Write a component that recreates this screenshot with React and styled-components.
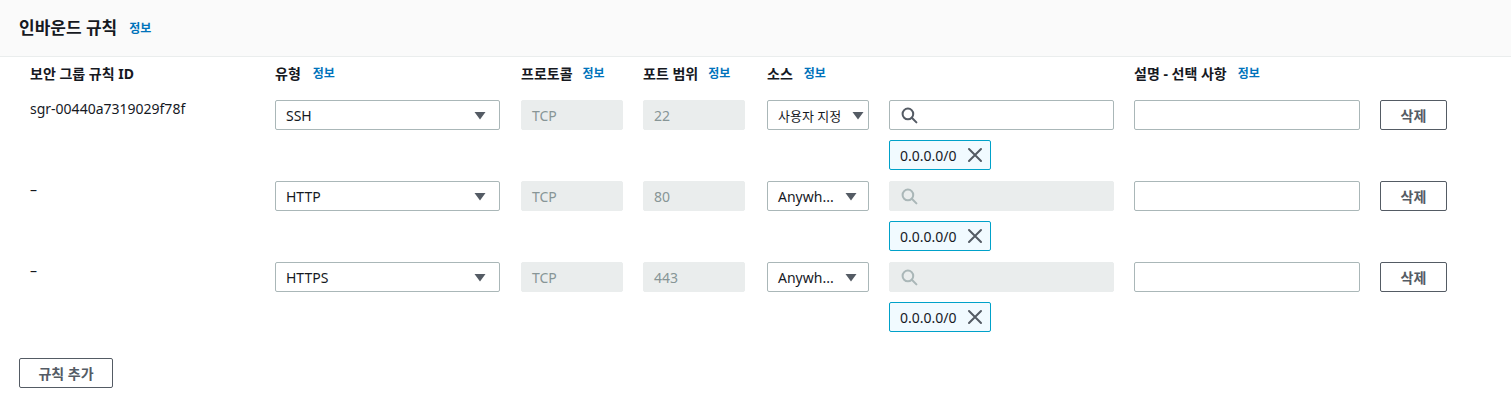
import React from 'react'
import styled, { createGlobalStyle } from 'styled-components'

const GlobalStyle = createGlobalStyle`
  body {
    margin: 0;
    background: #fff;
    font-family: "Noto Sans", "Noto Sans CJK KR", sans-serif;
    color: #16191f;
  }
`;

const Panel = styled.section`
  width: 1511px;
  min-height: 407px;
  background: #fff;
`;

const PanelHeader = styled.header`
  height: 57px;
  box-sizing: border-box;
  background: #fafafa;
  border-bottom: 1px solid #eaeded;
  display: flex;
  align-items: center;
  gap: 12px;
  padding: 0 19px 1px;
`;

const Title = styled.h2`
  margin: 0;
  font-size: 17px;
  font-weight: 700;
  line-height: 22px;
`;

const InfoLink = styled.a`
  font-size: 12px;
  font-weight: 700;
  color: #0073bb;
  text-decoration: none;
  margin-left: ${p => p.$gap || 0}px;
`;

const Grid = styled.div`
  display: grid;
  grid-template-columns: 225px 226px 102px 104px 102px 225px 226px 67px;
  column-gap: 20px;
  padding: 6px 0 0 30px;
`;

const HeadCell = styled.div`
  display: flex;
  align-items: center;
  height: 20px;
  font-size: 14px;
  font-weight: 700;
  margin-bottom: 17px;
`;

const IdCell = styled.div`
  font-size: 14px;
  line-height: 18px;
  height: 30px;
`;

const Stack = styled.div`
  display: flex;
  flex-direction: column;
  gap: 10px;
  margin-bottom: ${p => (p.$last ? 0 : 11)}px;
  align-items: flex-start;
`;

const Box = styled.div`
  box-sizing: border-box;
  height: 30px;
  width: ${p => p.$w || '100%'};
  display: flex;
  align-items: center;
  gap: ${p => p.$gap || 6}px;
  padding: 0 ${p => p.$pr || 10}px 0 ${p => p.$pl || 10}px;
  font-size: 14px;
  border-radius: 2px;
  border: 1px solid ${p => (p.$disabled ? '#eaeded' : '#aab7b8')};
  background: ${p => (p.$disabled ? '#eaeded' : '#fff')};
  color: ${p => (p.$disabled ? '#879596' : '#16191f')};
  white-space: nowrap;
`;

const BoxText = styled.span`
  flex: 1;
  font-size: ${p => p.$size || 14}px;
`;

const Token = styled.div`
  box-sizing: border-box;
  height: 30px;
  width: 102px;
  display: flex;
  align-items: center;
  justify-content: space-between;
  padding: 0 7px 0 10px;
  font-size: 14px;
  border: 1px solid #00a1c9;
  border-radius: 2px;
  background: #f1faff;
`;

const Button = styled.button`
  box-sizing: border-box;
  height: 30px;
  width: ${p => p.$w || '67px'};
  border: 1px solid #545b64;
  border-radius: 2px;
  background: #fff;
  color: #545b64;
  font-family: inherit;
  font-size: 14px;
  font-weight: 700;
  padding: 0;
  cursor: pointer;
`;

const Footer = styled.div`
  padding: 26px 19px 0;
`;

const Caret = () => (
  <svg width="12" height="9" viewBox="0 0 12 9">
    <path d="M0.5 1h11L6 8.5z" fill="#545b64" />
  </svg>
);

const Search = ({ color }) => (
  <svg width="17" height="17" viewBox="0 0 16 16" fill="none" stroke={color} strokeWidth="1.9">
    <circle cx="6.5" cy="6.5" r="5" />
    <path d="M10.2 10.2l4.3 4.3" strokeLinecap="round" />
  </svg>
);

const Close = () => (
  <svg width="16" height="16" viewBox="0 0 16 16" stroke="#545b64" strokeWidth="2" strokeLinecap="round">
    <path d="M2 2l12 12M14 2L2 14" />
  </svg>
);

const rules = [
  { id: 'sgr-00440a7319029f78f', type: 'SSH', port: '22', source: '사용자 지정', custom: true },
  { id: '–', type: 'HTTP', port: '80', source: 'Anywh...', custom: false },
  { id: '–', type: 'HTTPS', port: '443', source: 'Anywh...', custom: false },
];

function App() {
  return (
    <Panel>
      <GlobalStyle />
      <PanelHeader>
        <Title>인바운드 규칙</Title>
        <InfoLink>정보</InfoLink>
      </PanelHeader>
      <Grid>
        <HeadCell>보안 그룹 규칙 ID</HeadCell>
        <HeadCell>유형<InfoLink $gap={12}>정보</InfoLink></HeadCell>
        <HeadCell>프로토콜<InfoLink $gap={10}>정보</InfoLink></HeadCell>
        <HeadCell>포트 범위<InfoLink $gap={10}>정보</InfoLink></HeadCell>
        <HeadCell>소스<InfoLink $gap={11}>정보</InfoLink></HeadCell>
        <HeadCell />
        <HeadCell>설명 - 선택 사항<InfoLink $gap={11}>정보</InfoLink></HeadCell>
        <HeadCell />
        {rules.map((r, i) => {
          const last = i === rules.length - 1;
          return (
            <React.Fragment key={i}>
              <Stack $last={last}><IdCell>{r.id}</IdCell></Stack>
              <Stack $last={last}>
                <Box $w="225px" $pr={13}><BoxText>{r.type}</BoxText><Caret /></Box>
              </Stack>
              <Stack $last={last}><Box $disabled>TCP</Box></Stack>
              <Stack $last={last}><Box $disabled $w="102px">{r.port}</Box></Stack>
              <Stack $last={last}>
                {r.custom ? (
                  <Box $pl={10} $pr={4} $gap={3}><BoxText $size={13}>{r.source}</BoxText><Caret /></Box>
                ) : (
                  <Box $pl={10} $pr={11}><BoxText>{r.source}</BoxText><Caret /></Box>
                )}
              </Stack>
              <Stack $last={last}>
                <Box $disabled={!r.custom} $pl={11}>
                  <Search color={r.custom ? '#545b64' : '#aab7b8'} />
                </Box>
                <Token>0.0.0.0/0<Close /></Token>
              </Stack>
              <Stack $last={last}><Box /></Stack>
              <Stack $last={last}><Button>삭제</Button></Stack>
            </React.Fragment>
          );
        })}
      </Grid>
      <Footer>
        <Button $w="94px">규칙 추가</Button>
      </Footer>
    </Panel>
  );
}

export default App;
